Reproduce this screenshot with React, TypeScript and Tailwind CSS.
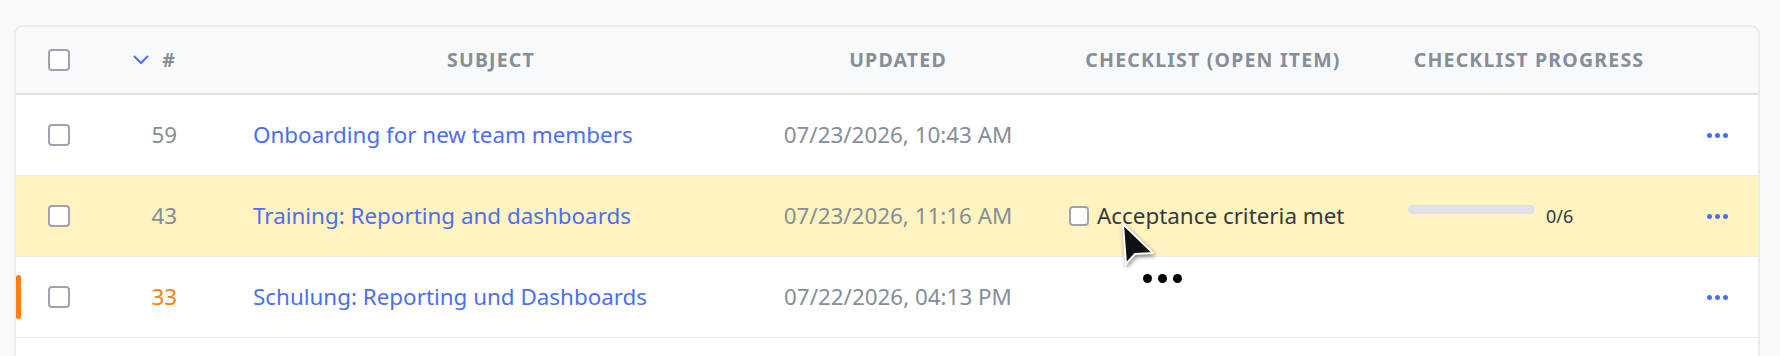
import React from "react";

type Row = {
  id: number;
  subject: string;
  updated: string;
  highlight?: boolean;
  overdue?: boolean;
  hidden?: boolean;
  checklist?: string;
  done?: number;
  total?: number;
};

const rows: Row[] = [
  { id: 59, subject: "Onboarding for new team members", updated: "07/23/2026, 10:43 AM" },
  {
    id: 43,
    subject: "Training: Reporting and dashboards",
    updated: "07/23/2026, 11:16 AM",
    highlight: true,
    checklist: "Acceptance criteria met",
    done: 0,
    total: 6
  },
  { id: 33, subject: "Schulung: Reporting und Dashboards", updated: "07/22/2026, 04:13 PM", overdue: true },
  // next row only peeks in at the bottom edge
  { id: 0, subject: "", updated: "", overdue: true, hidden: true }
];

const cols = "grid grid-cols-[94px_120px_522px_292px_338px_294px_1fr] items-center";

const Checkbox = ({ small }: { small?: boolean }) => (
  <span
    className={
      small
        ? "block w-[20px] h-[20px] rounded-[4px] border-2 border-[#a3a1b0] bg-white shrink-0"
        : "block w-[22px] h-[22px] rounded-[4px] border-2 border-[#a3a1b0] bg-white"
    }
  />
);

const Dots = () => (
  <div className="flex gap-[3px] justify-center">
    <span className="w-[5px] h-[5px] rounded-full bg-[#4c6ef5]" />
    <span className="w-[5px] h-[5px] rounded-full bg-[#4c6ef5]" />
    <span className="w-[5px] h-[5px] rounded-full bg-[#4c6ef5]" />
  </div>
);

const App = () => {
  return (
    <div className="min-h-screen bg-[#f8f9fa] pl-[14px] pr-[20px] pt-[25px] font-['Noto_Sans',sans-serif] relative">
      <div className="bg-white border-2 border-[#e9ecef] rounded-[9px] overflow-hidden shadow-[0_1px_2px_rgba(0,0,0,0.04)]">
        {/* header */}
        <div className={`${cols} h-[68px] bg-[#f8f9fa] border-b-2 border-[#dee2e6] text-[19.5px] font-bold tracking-[1.2px] text-[#868e96] uppercase`}>
          <div className="pl-[32px]">
            <Checkbox />
          </div>
          <div className="flex items-center justify-end gap-[13px] pr-[54px]">
            <svg width="16" height="10" viewBox="0 0 16 10" fill="none">
              <path d="M1.5 1.5 L8 8 L14.5 1.5" stroke="#4c6ef5" strokeWidth="2" strokeLinecap="round" strokeLinejoin="round" />
            </svg>
            <span>#</span>
          </div>
          <div className="text-center px-[23px]">Subject</div>
          <div className="text-center">Updated</div>
          <div className="text-center">Checklist (open item)</div>
          <div className="text-center">Checklist progress</div>
          <div />
        </div>

        {rows.map((row, i) => (
          <div
            key={i}
            className={`${cols} relative h-[81px] border-b border-[#e9ecef] text-[22.4px] ${row.highlight ? "bg-[#fff3bf]" : "bg-white"}`}
          >
            {row.overdue && (
              <span className="absolute left-0 top-[18px] w-[5px] h-[44px] rounded-[3px] bg-[#fd7e14]" />
            )}
            {!row.hidden && (
              <>
                <div className="pl-[32px]">
                  <Checkbox />
                </div>
                <div className={`text-right pr-[53px] ${row.overdue ? "text-[#fd7e14]" : "text-[#868e96]"}`}>
                  {row.id}
                </div>
                <div className="px-[23px] text-[#4c6ef5] truncate">{row.subject}</div>
                <div className="text-center text-[#868e96]">{row.updated}</div>
                <div className="pl-[25px] flex items-center gap-[8px] text-[#343a40]">
                  {row.checklist && (
                    <>
                      <Checkbox small />
                      <span>{row.checklist}</span>
                    </>
                  )}
                </div>
                <div className="pl-[26px]">
                  {row.total !== undefined && (
                    <div className="flex items-start gap-[11px]">
                      <div className="w-[127px] h-[9px] rounded-full bg-[#dee2e6] mt-[-2px]" />
                      <span className="text-[18px] text-[#343a40] leading-none">
                        {row.done}/{row.total}
                      </span>
                    </div>
                  )}
                </div>
                <div>
                  <Dots />
                </div>
              </>
            )}
          </div>
        ))}
      </div>

      {/* drag cursor overlay */}
      <div className="absolute left-[1120px] top-[222px] pointer-events-none">
        <svg width="40" height="48" viewBox="0 0 40 48" className="drop-shadow-[1px_2px_2px_rgba(0,0,0,0.45)]">
          <path d="M3 2 L6 42 L15 32 L33 31 Z" fill="#111" stroke="#fff" strokeWidth="2" strokeLinejoin="round" />
        </svg>
      </div>
      <div className="absolute left-[1143px] top-[274px] flex gap-[6px] pointer-events-none">
        <span className="w-[9px] h-[9px] rounded-full bg-black" />
        <span className="w-[9px] h-[9px] rounded-full bg-black" />
        <span className="w-[9px] h-[9px] rounded-full bg-black" />
      </div>
    </div>
  );
};

export default App;
